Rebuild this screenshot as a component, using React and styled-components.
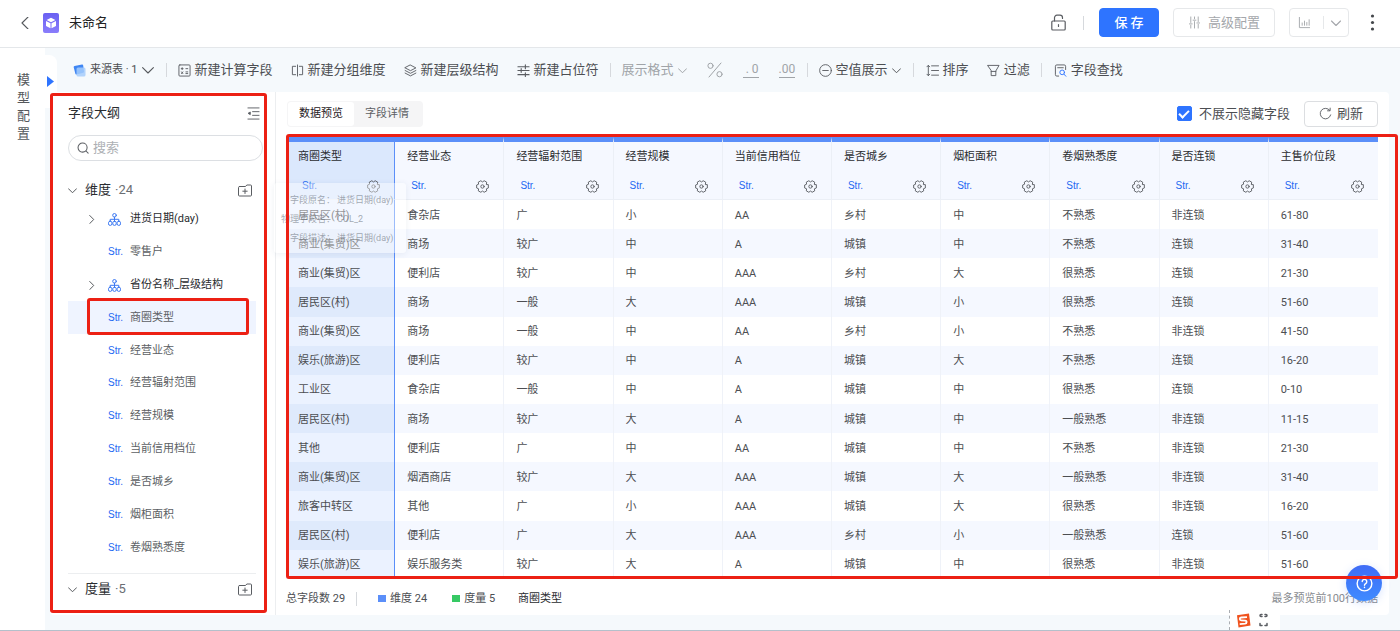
import { useState } from "react";
import styled, { createGlobalStyle, css } from "styled-components";

const GlobalStyle = createGlobalStyle`
    * {
        box-sizing: border-box;
    }

    body {
        margin: 0;
        font-family: Roboto, "Noto Sans CJK SC", sans-serif;
        font-size: 11px;
        line-height: 16px;
        color: #4c4e52;
        background: #f5f9fc;
    }

    button, input {
        font: inherit;
        color: inherit;
    }

    button {
        padding: 0;
        border: none;
        background: none;
        cursor: pointer;
    }

    svg {
        display: block;
        flex: none;
    }
`;

const Page = styled.div`
    position: relative;
    display: flex;
    flex-direction: column;
    min-height: 100vh;
    border-bottom: 1px solid #b4c0cb;
`;

const Header = styled.header`
    display: flex;
    align-items: center;
    height: 48px;
    padding: 0 25px 2px 19px;
    background: #fff;
    border-bottom: 1px solid #e4e7ea;
`;

const Logo = styled.span`
    display: grid;
    place-items: center;
    width: 16px;
    height: 20px;
    margin: 0 10px 0 12px;
    border-radius: 2px;
    background: linear-gradient(#6a60f2, #8a7dfb);
`;

const Title = styled.h1`
    flex: 1;
    margin: 0;
    font-size: 13px;
    font-weight: 400;
    color: #222;
`;

const Divider = styled.span`
    flex: none;
    width: 1px;
    height: 14px;
    margin: 0 ${({ $after }) => $after ?? 11}px 0 ${({ $before }) => $before ?? 11}px;
    background: #d6d9dd;
`;

const HeaderButtons = styled.div`
    display: flex;
    gap: 14px;
    margin-right: 21px;
`;

const HeaderButton = styled.button`
    display: flex;
    align-items: center;
    justify-content: center;
    gap: 7px;
    width: ${({ $width }) => $width}px;
    height: 29px;
    border: 1px solid #e6e8ea;
    border-radius: 4px;
    font-size: 13px;
    color: #a4a7ab;

    ${({ $primary }) => $primary && css`
        border-color: #2e74ff;
        background: #2e74ff;
        color: #fff;
        font-weight: 500;
    `}
`;

const SplitLine = styled.span`
    width: 1px;
    height: 13px;
    margin-left: 5px;
    background: #e6e8ea;
`;

const Body = styled.div`
    display: flex;
    flex: 1;
`;

const Rail = styled.aside`
    position: relative;
    display: flex;
    flex: none;
    flex-direction: column;
    align-items: center;
    width: 45px;
    padding: 23px 0 0 2px;
    background: #fff;
    font-size: 13px;
    line-height: 18px;
    color: #55585c;
`;

const RailText = styled.span`
    width: 13px;
`;

const RailToggle = styled.button`
    position: absolute;
    top: 7px;
    left: 100%;
    display: flex;
    align-items: center;
    width: 12px;
    height: 53px;
    padding-left: 2px;
    border-radius: 0 8px 0 0;
    background: #fff;
`;

const Main = styled.main`
    display: flex;
    flex: 1;
    flex-direction: column;
    min-width: 0;
    padding: 0 11px 15px 5px;
`;

const Toolbar = styled.div`
    display: flex;
    align-items: center;
    height: 44px;
    padding: 0 0 0 23px;
`;

const ToolGroup = styled.div`
    display: flex;
    align-items: center;
    gap: ${({ $gap }) => $gap ?? 18}px;
`;

const Tool = styled.button`
    display: flex;
    align-items: center;
    gap: 4px;
    font-size: ${({ $small }) => ($small ? 11 : 13)}px;
    white-space: nowrap;
    color: ${({ $muted }) => ($muted ? "#a0a4a8" : "#4c4e52")};
`;

const Panels = styled.div`
    display: flex;
    flex: 1;
    border-radius: 4px;
    background: #fff;
`;

const Outline = styled.section`
    position: relative;
    display: flex;
    flex: none;
    flex-direction: column;
    width: 226px;
    padding: 11px 12px 0 18px;
    border-right: 1px solid #eceef0;
`;

const OutlineHead = styled.div`
    display: flex;
    align-items: center;
    justify-content: space-between;
    height: 20px;
    margin-bottom: 12px;
    padding-right: 3px;
`;

const Heading = styled.h2`
    margin: 0;
    font-size: 13px;
    font-weight: 400;
    color: #2a2c30;
`;

const SearchBox = styled.label`
    display: flex;
    align-items: center;
    gap: 4px;
    height: 26px;
    padding: 0 8px;
    border: 1px solid #dcdfe3;
    border-radius: 13px;
`;

const SearchInput = styled.input`
    flex: 1;
    min-width: 0;
    padding: 0;
    border: none;
    outline: none;
    background: none;
    font-size: 13px;

    &::placeholder {
        color: #adb0b4;
    }
`;

const GroupHead = styled.div`
    display: flex;
    align-items: center;
    height: 24px;
    margin-top: ${({ $first }) => ($first ? 17 : 0)}px;
    padding-right: 11px;
    font-size: 13px;
    color: #2a2c30;

    & > svg {
        margin-right: 8px;
    }

    & > button {
        margin-left: auto;
    }
`;

const GroupCount = styled.span`
    margin-left: 4px;
    color: #6b6e73;
`;

const Tree = styled.ul`
    display: flex;
    flex: 1;
    flex-direction: column;
    margin: 1px 7px 9px 0;
    padding: 0;
    list-style: none;
`;

const TreeRow = styled.li`
    position: relative;
    display: grid;
    flex: 1;
    grid-template-columns: 21px 22px 1fr;
    align-items: center;
    padding-left: 19px;
    background: ${({ $selected }) => ($selected ? "#eff4ff" : "none")};
    color: ${({ $parent }) => ($parent ? "#2a2c30" : "#5c5f64")};
`;

const StrTag = styled.span`
    font-family: "Liberation Sans", sans-serif;
    font-size: 10px;
    color: #2468f2;
`;

const OutlineFoot = styled.div`
    margin-right: 7px;
    padding: 3px 0 14px;
    border-top: 1px solid #eceef0;

    & > div {
        padding-right: 4px;
    }
`;

const Mark = styled.span`
    position: absolute;
    z-index: 5;
    inset: ${({ $inset }) => $inset};
    border: 3px solid #ec2014;
    border-radius: 3px;
    pointer-events: none;
`;

const Preview = styled.section`
    display: flex;
    flex: 1;
    flex-direction: column;
    min-width: 0;
    padding: 0 11px 0 10px;
`;

const PreviewHead = styled.div`
    display: flex;
    align-items: center;
    justify-content: space-between;
    height: 45px;
    padding-bottom: 2px;
`;

const Tabs = styled.div`
    display: flex;
    margin-left: 1px;
    padding: 1px;
    border-radius: 4px;
    background: #f5f5f6;
`;

const Tab = styled.button`
    height: 24px;
    padding: 1px ${({ $active }) => ($active ? 11 : 13)}px 0 11px;
    border-radius: 3px;
    background: ${({ $active }) => ($active ? "#fff" : "none")};
    color: ${({ $active }) => ($active ? "#1f2125" : "#5c5f64")};
`;

const Actions = styled.div`
    display: flex;
    align-items: center;
    gap: 14px;
    font-size: 13px;
`;

const CheckLabel = styled.label`
    display: flex;
    align-items: center;
    gap: 7px;
`;

const Checkbox = styled.input`
    appearance: none;
    width: 15px;
    height: 15px;
    margin: 0;
    border: 1px solid #2e74ff;
    border-radius: 2px;
    display: grid;
    place-items: center;

    &:checked {
        background: #2e74ff;
    }

    &:checked::after {
        content: "";
        width: 4px;
        height: 8px;
        margin-bottom: 2px;
        border: solid #fff;
        border-width: 0 2px 2px 0;
        transform: rotate(45deg);
    }
`;

const RefreshButton = styled.button`
    display: flex;
    align-items: center;
    justify-content: center;
    gap: 5px;
    width: 74px;
    height: 26px;
    border: 1px solid #dcdee1;
    border-radius: 4px;
`;

const TableArea = styled.div`
    position: relative;
    flex: 1;
    display: flex;
`;

const Table = styled.table`
    width: 100%;
    table-layout: fixed;
    border-collapse: separate;
    border-spacing: 0;
`;

const HeadCell = styled.th`
    height: 63px;
    padding: 7px 17px 0 12px;
    border-top: 5px solid #5b8ff9;
    border-right: 1px solid #ebeff6;
    border-bottom: 1px solid #ebeff6;
    background: #f5f8ff;
    font-weight: 400;
    text-align: left;
    vertical-align: top;
    color: #2a2c30;

    &:first-child {
        border-right-color: #5b8ff9;
        background: #dbe8fd;
    }

    &:last-child {
        border-right: none;
    }
`;

const HeadTools = styled.div`
    display: flex;
    align-items: center;
    justify-content: space-between;
    height: 16px;
    margin: 13px -3px 0 4px;
`;

const Cell = styled.td`
    height: 28px;
    padding: 2px 12px 0;
    border-right: 1px solid #eff2f8;
    white-space: nowrap;

    &:first-child {
        border-right-color: #5b8ff9;
        background: #ebf2ff;
    }

    &:last-child {
        border-right: none;
    }
`;

const Row = styled.tr`
    &:nth-child(even) {
        background: #f5f8ff;
    }

    &:nth-child(even) > td:first-child {
        background: #dfeafc;
    }
`;

const Tip = styled.div`
    position: absolute;
    top: 46px;
    left: -12px;
    width: 132px;
    height: 70px;
    padding: 8px 0 0 7px;
    overflow: hidden;
    border-radius: 3px;
    background: rgba(255, 255, 255, 0.4);
    box-shadow: 0 1px 6px rgba(40, 70, 120, 0.08);
    font-size: 9px;
    line-height: 19px;
    color: rgba(80, 88, 100, 0.5);
    pointer-events: none;
`;

const TipRow = styled.div`
    display: grid;
    grid-template-columns: 54px 1fr;
    gap: 2px;
    white-space: nowrap;

    & > span:first-child {
        text-align: right;
    }
`;

const Footer = styled.footer`
    display: flex;
    align-items: center;
    height: 36px;
    padding-top: 3px;
    white-space: nowrap;
`;

const Legend = styled.span`
    display: flex;
    align-items: center;
    gap: 4px;
    margin-right: ${({ $gap }) => $gap}px;

    &::before {
        content: "";
        width: 8px;
        height: 7px;
        background: ${({ $color }) => $color};
    }
`;

const FooterName = styled.span`
    flex: 1;
    color: #2a2c30;
`;

const FooterHint = styled.span`
    color: #888b90;
`;

const HelpButton = styled.button`
    position: absolute;
    z-index: 4;
    right: 18px;
    bottom: 29px;
    display: grid;
    place-items: center;
    width: 36px;
    height: 36px;
    border-radius: 50%;
    background: linear-gradient(#3f6cf6, #3f8bff);
    box-shadow: 0 2px 10px rgba(60, 120, 255, 0.2);
`;

const InputBar = styled.div`
    position: absolute;
    right: 120px;
    bottom: 0;
    display: flex;
    align-items: center;
    gap: 8px;
    height: 20px;
    padding: 0 12px 0 6px;
    border-left: 1px dashed #a9adb2;
    background: #fff;
`;

const Icon = ({ size = 13, width, height, color = "#5a5d62", stroke = 1, box = "0 0 14 14", children }) => (
    <svg
        width={width ?? size}
        height={height ?? size}
        viewBox={box}
        fill="none"
        stroke={color}
        strokeWidth={stroke}
        strokeLinecap="round"
        strokeLinejoin="round"
        aria-hidden="true"
    >
        {children}
    </svg>
);

const Chevron = ({ dir = "down", size = 9, color = "#55585c" }) => {
    const paths = { down: "M.5 3 5 7.5 9.5 3", right: "M3 .5 7.5 5 3 9.5", left: "M7.5 0 2.5 5l5 5" };
    return <Icon size={size} color={color} stroke={size > 10 ? 0.9 : 1.1} box="0 0 10 10"><path d={paths[dir]} /></Icon>;
};

const LogoIcon = () => (
    <svg width="12" height="12" viewBox="0 0 12 12" fill="#fff">
        <path d="M6 .8 10.4 3 6 5.2 1.6 3zM1 4l4.5 2.2v5L1 9zM11 4 6.5 6.2v5L11 9z" />
    </svg>
);

const LockIcon = () => (
    <Icon width={15} height={17} box="0 0 15 17" stroke={1.2}>
        <rect x=".8" y="7" width="13.4" height="9" rx="1" />
        <path d="M3.5 7V4A2.500 2.500 0 0 1 6 1.200h3a2.500 2.500 0 0 1 2.500 2.500V4.500M7.500 10.500v2" />
    </Icon>
);

const SlidersIcon = () => (
    <Icon color="#a4a7ab">
        <path d="M3 1v6M3 10v3M7 1v2M7 6v7M11 1v5M11 9v4M1.5 8.5h3M5.5 4.5h3M9.5 7.5h3" />
    </Icon>
);

const ChartIcon = () => (
    <Icon color="#a4a7ab"><path d="M1.5 1.5v11h11M4.5 10V7.5M7 10V5.5M9.5 10V7M12 10V4" /></Icon>
);

const MoreIcon = () => (
    <svg width="5" height="17" viewBox="0 0 5 17" fill="#44474b">
        <circle cx="2.5" cy="2" r="1.6" />
        <circle cx="2.5" cy="8.5" r="1.6" />
        <circle cx="2.5" cy="15" r="1.6" />
    </svg>
);

const SourceIcon = () => (
    <svg width="13" height="13" viewBox="0 0 13 13">
        <path d="M1.500 2 9 .6a1 1 0 0 1 1.200.8L11 7.500a1 1 0 0 1-.8 1.200L3.500 10.400a1 1 0 0 1-1.200-.8L.7 3.200A1 1 0 0 1 1.500 2z" fill="#3f86f3" />
        <rect x="3.500" y="3.500" width="9" height="9" rx="1.500" fill="#a5ccfb" opacity=".85" />
    </svg>
);

const CalcIcon = () => (
    <Icon>
        <rect x="1" y="1" width="12" height="12" rx="1" />
        <path d="M3.5 5h2M4.5 4v2M8.5 5h2M3.8 8.5l1.4 1.8M5.2 8.5l-1.4 1.8M8.5 8.5h2M8.5 10.3h2" />
    </Icon>
);

const GroupIcon = () => (
    <Icon><path d="M5 2.5H1.5v9H5M9 2.5h3.500v9H9M7 1v12" /></Icon>
);

const LayersIcon = () => (
    <Icon><path d="m7 1.2 5.8 3L7 7.2l-5.800-3zM1.2 7 7 10l5.8-3M1.2 9.8l5.8 3 5.8-3" /></Icon>
);

const PlaceholderIcon = () => (
    <Icon stroke={1.2}><path d="M1 3h12M1 7h12M1 11.5h12M9 1v4M4.5 5v4M9 9.5v4" /></Icon>
);

const PercentIcon = () => (
    <Icon size={16} color="#a0a4a8" box="0 0 16 16">
        <circle cx="3.5" cy="3.8" r="2.6" />
        <circle cx="12.5" cy="12.2" r="2.6" />
        <path d="M14 1 2 15" />
    </Icon>
);

const Decimal = styled.span`
    width: 16px;
    height: 15px;
    border-bottom: 1px solid #a0a4a8;
    font-size: 12px;
    line-height: 12px;
    text-align: right;
    white-space: pre;
    color: #a0a4a8;
`;

const EmptyIcon = () => (
    <Icon><circle cx="7" cy="7" r="6.3" /><path d="M4 7h6" /></Icon>
);

const SortIcon = () => (
    <Icon><path d="M2.5 1.5v11M1 3l1.500-1.500L4 3M1 11l1.500 1.500L4 11M6 2h7.500M6 7h7.500M6 12h7.500" /></Icon>
);

const FilterIcon = () => (
    <Icon><path d="M1 1.5h12L9.5 7.5v5h-5v-5zM4.5 8h5" /></Icon>
);

const FindIcon = () => (
    <Icon>
        <path d="M5 13H3a1.500 1.500 0 0 1-1.500-1.500v-9A1.500 1.500 0 0 1 3 1h8a1.500 1.500 0 0 1 1.500 1.500V6M4 4h6" />
        <g stroke="#2e74ff"><circle cx="8.8" cy="9" r="2.5" /><path d="m10.8 11 2 2.2" /></g>
    </Icon>
);

const FoldIcon = () => (
    <Icon><path d="M1 1h12M6 5h7M6 9h7M1 13h12" /><path d="M3.5 5.8v2.4L1.5 7z" fill="#5a5d62" /></Icon>
);

const SearchIcon = () => (
    <Icon size={12} stroke={1.2}><circle cx="6.5" cy="6.5" r="5.3" /><path d="m10.5 10.5 2.5 2.5" /></Icon>
);

const AddFolderIcon = () => (
    <Icon width={14} height={13} box="0 0 14 13">
        <path d="M1.5 2.5h6L8.8 1h3.7a1 1 0 0 1 1 1v9a1 1 0 0 1-1 1h-11a1 1 0 0 1-1-1V3.5a1 1 0 0 1 1-1zM7 5v4.5M4.8 7.2h4.4" />
    </Icon>
);

const TreeIcon = () => (
    <Icon color="#3c79f2" box="0 0 13 13">
        <circle cx="6.5" cy="2.3" r="1.8" />
        <path d="M6.5 4.100v4M2.2 8V6.300h8.600V8" />
        <rect x=".5" y="8.2" width="3.400" height="4.200" rx="1.600" />
        <rect x="4.800" y="8.2" width="3.400" height="4.200" rx="1.600" />
        <rect x="9.100" y="8.2" width="3.400" height="4.200" rx="1.600" />
    </Icon>
);

const RefreshIcon = () => (
    <Icon><path d="M11.5 3.5A5.7 5.7 0 1 0 12.6 8.500M12 1.200v2.900H9.200" /></Icon>
);

const GearIcon = () => (
    <Icon>
        <path d="M13.3 5.4v3.2l-2.1.9.3 2.200-2.700 1.500L7 11.900l-1.800 1.300-2.700-1.500.3-2.200-2.100-.9V5.400l2.100-.9-.3-2.200L5.200.8 7 2.100 8.800.8l2.700 1.500-.3 2.200z" />
        <circle cx="7" cy="7" r="1.800" />
    </Icon>
);

const HelpIcon = () => (
    <Icon size={17} color="#fff" box="0 0 18 18" stroke={1.5}>
        <circle cx="9" cy="9" r="7.8" />
        <path d="M6.6 7a2.4 2.4 0 1 1 3.600 2.100C9.300 9.600 9 10 9 10.900M9 13v.2" />
    </Icon>
);

const SogouIcon = () => (
    <svg width="15" height="15" viewBox="0 0 15 15">
        <path d="M1 2.2 13 .5l1.500 12L2.500 14.500z" fill="#f0521d" />
        <path d="M11 4.2 5.2 4.500c-2 .3-1.800 2.800 0 2.900l4 .2c2 .1 1.800 2.900-.2 3.100l-5.300.4" fill="none" stroke="#fff" strokeWidth="1.8" />
    </svg>
);

const KeyboardIcon = () => (
    <Icon width={9} height={16} box="0 0 9 16" stroke={1.5}>
        <path d="M3 2.5H2Q1 2.500 1 3.500t1 1h1M6 2.500h1q1 0 1 1t-1 1H6M1 11.500v2h2M8 11.500v2H6" />
    </Icon>
);

const treeItems = [
    { name: "进货日期(day)", parent: true },
    { name: "零售户" },
    { name: "省份名称_层级结构", parent: true },
    { name: "商圈类型", selected: true },
    { name: "经营业态" },
    { name: "经营辐射范围" },
    { name: "经营规模" },
    { name: "当前信用档位" },
    { name: "是否城乡" },
    { name: "烟柜面积" },
    { name: "卷烟熟悉度" },
];

const columns = [
    "商圈类型", "经营业态", "经营辐射范围", "经营规模", "当前信用档位",
    "是否城乡", "烟柜面积", "卷烟熟悉度", "是否连锁", "主售价位段",
];

const rows = [
    ["居民区(村)", "食杂店", "广", "小", "AA", "乡村", "中", "不熟悉", "非连锁", "61-80"],
    ["商业(集贸)区", "商场", "较广", "中", "A", "城镇", "中", "不熟悉", "连锁", "31-40"],
    ["商业(集贸)区", "便利店", "较广", "中", "AAA", "乡村", "大", "很熟悉", "连锁", "21-30"],
    ["居民区(村)", "商场", "一般", "大", "AAA", "城镇", "小", "很熟悉", "连锁", "51-60"],
    ["商业(集贸)区", "商场", "一般", "中", "AA", "乡村", "小", "不熟悉", "非连锁", "41-50"],
    ["娱乐(旅游)区", "便利店", "较广", "中", "A", "城镇", "大", "不熟悉", "连锁", "16-20"],
    ["工业区", "食杂店", "一般", "中", "A", "城镇", "中", "很熟悉", "连锁", "0-10"],
    ["居民区(村)", "商场", "较广", "大", "A", "城镇", "中", "一般熟悉", "非连锁", "11-15"],
    ["其他", "便利店", "广", "中", "AA", "城镇", "中", "不熟悉", "非连锁", "21-30"],
    ["商业(集贸)区", "烟酒商店", "较广", "大", "AAA", "城镇", "大", "一般熟悉", "非连锁", "31-40"],
    ["旅客中转区", "其他", "广", "小", "AAA", "城镇", "大", "很熟悉", "非连锁", "16-20"],
    ["居民区(村)", "便利店", "广", "大", "AAA", "乡村", "小", "一般熟悉", "连锁", "51-60"],
    ["娱乐(旅游)区", "娱乐服务类", "较广", "大", "A", "城镇", "中", "很熟悉", "非连锁", "51-60"],
];

const OutlinePanel = () => (
    <Outline>
        <OutlineHead>
            <Heading>字段大纲</Heading>
            <button aria-label="收起"><FoldIcon /></button>
        </OutlineHead>
        <SearchBox>
            <SearchIcon />
            <SearchInput placeholder="搜索" aria-label="搜索" />
        </SearchBox>
        <GroupHead $first>
            <Chevron />
            维度<GroupCount>·24</GroupCount>
            <button aria-label="新建文件夹"><AddFolderIcon /></button>
        </GroupHead>
        <Tree>
            {treeItems.map(({ name, parent, selected }) => (
                <TreeRow key={name} $parent={parent} $selected={selected}>
                    <span>{parent && <Chevron dir="right" />}</span>
                    {parent ? <TreeIcon /> : <StrTag>Str.</StrTag>}
                    <span>{name}</span>
                    {selected && <Mark $inset="-3px 7px -1px 19px" />}
                </TreeRow>
            ))}
        </Tree>
        <OutlineFoot>
            <GroupHead>
                <Chevron />
                度量<GroupCount>·5</GroupCount>
                <button aria-label="新建文件夹"><AddFolderIcon /></button>
            </GroupHead>
        </OutlineFoot>
        <Mark $inset="1px 8px 2px 0" />
    </Outline>
);

const PreviewPanel = () => {
    const [tab, setTab] = useState(0);
    const [hideHidden, setHideHidden] = useState(true);

    return (
        <Preview>
            <PreviewHead>
                <Tabs>
                    {["数据预览", "字段详情"].map((name, i) => (
                        <Tab key={name} $active={tab === i} onClick={() => setTab(i)}>{name}</Tab>
                    ))}
                </Tabs>
                <Actions>
                    <CheckLabel>
                        <Checkbox type="checkbox" checked={hideHidden} onChange={() => setHideHidden(prev => !prev)} />
                        不展示隐藏字段
                    </CheckLabel>
                    <RefreshButton><RefreshIcon />刷新</RefreshButton>
                </Actions>
            </PreviewHead>
            <TableArea>
                <Table>
                    <thead>
                        <tr>
                            {columns.map(name => (
                                <HeadCell key={name}>
                                    {name}
                                    <HeadTools>
                                        <StrTag>Str.</StrTag>
                                        <button aria-label={`${name} 设置`}><GearIcon /></button>
                                    </HeadTools>
                                </HeadCell>
                            ))}
                        </tr>
                    </thead>
                    <tbody>
                        {rows.map((row, i) => (
                            <Row key={i}>
                                {row.map((value, j) => <Cell key={j}>{value}</Cell>)}
                            </Row>
                        ))}
                    </tbody>
                </Table>
                <Tip>
                    <TipRow><span>字段原名：</span><span>进货日期(day)</span></TipRow>
                    <TipRow><span>物理字段名：</span><span>COL_2</span></TipRow>
                    <TipRow><span>字段描述：</span><span>进货日期(day)</span></TipRow>
                </Tip>
                <Mark $inset="-3px -20px 0 0" />
            </TableArea>
            <Footer>
                <span>总字段数 29</span>
                <Divider $after={21} />
                <Legend $color="#5b8ff9" $gap={25}>维度 24</Legend>
                <Legend $color="#36c964" $gap={23}>度量 5</Legend>
                <FooterName>商圈类型</FooterName>
                <FooterHint>最多预览前100行数据</FooterHint>
            </Footer>
        </Preview>
    );
};

export default function App() {
    return (
        <>
            <GlobalStyle />
            <Page>
                <Header>
                    <button aria-label="返回"><Chevron dir="left" size={12} /></button>
                    <Logo><LogoIcon /></Logo>
                    <Title>未命名</Title>
                    <button aria-label="锁定"><LockIcon /></button>
                    <Divider $before={17} $after={15} />
                    <HeaderButtons>
                        <HeaderButton $width={60} $primary>保 存</HeaderButton>
                        <HeaderButton $width={102}><SlidersIcon />高级配置</HeaderButton>
                        <HeaderButton $width={60} aria-label="图表">
                            <ChartIcon />
                            <SplitLine />
                            <Chevron size={10} color="#a4a7ab" />
                        </HeaderButton>
                    </HeaderButtons>
                    <button aria-label="更多"><MoreIcon /></button>
                </Header>
                <Body>
                    <Rail>
                        <RailText>模型配置</RailText>
                        <RailToggle aria-label="展开">
                            <svg width="7" height="11" viewBox="0 0 7 11" fill="#2e74ff"><path d="M0 0 7 5.5 0 11z" /></svg>
                        </RailToggle>
                    </Rail>
                    <Main>
                        <Toolbar>
                            <Tool $small><SourceIcon />来源表 · 1<Chevron size={12} /></Tool>
                            <Divider $before={12} />
                            <ToolGroup>
                                <Tool><CalcIcon />新建计算字段</Tool>
                                <Tool><GroupIcon />新建分组维度</Tool>
                                <Tool><LayersIcon />新建层级结构</Tool>
                                <Tool><PlaceholderIcon />新建占位符</Tool>
                            </ToolGroup>
                            <Divider />
                            <ToolGroup $gap={20}>
                                <Tool $muted>展示格式<Chevron color="#a0a4a8" /></Tool>
                                <Tool aria-label="百分比"><PercentIcon /></Tool>
                                <Tool><Decimal>. 0</Decimal></Tool>
                                <Tool><Decimal>.00</Decimal></Tool>
                            </ToolGroup>
                            <Divider $before={12} />
                            <Tool><EmptyIcon />空值展示<Chevron /></Tool>
                            <Divider $before={12} $after={12} />
                            <ToolGroup>
                                <Tool><SortIcon />排序</Tool>
                                <Tool><FilterIcon />过滤</Tool>
                            </ToolGroup>
                            <Divider $after={12} />
                            <Tool><FindIcon />字段查找</Tool>
                        </Toolbar>
                        <Panels>
                            <OutlinePanel />
                            <PreviewPanel />
                        </Panels>
                    </Main>
                </Body>
                <HelpButton aria-label="帮助"><HelpIcon /></HelpButton>
                <InputBar><SogouIcon /><KeyboardIcon /></InputBar>
            </Page>
        </>
    );
}
